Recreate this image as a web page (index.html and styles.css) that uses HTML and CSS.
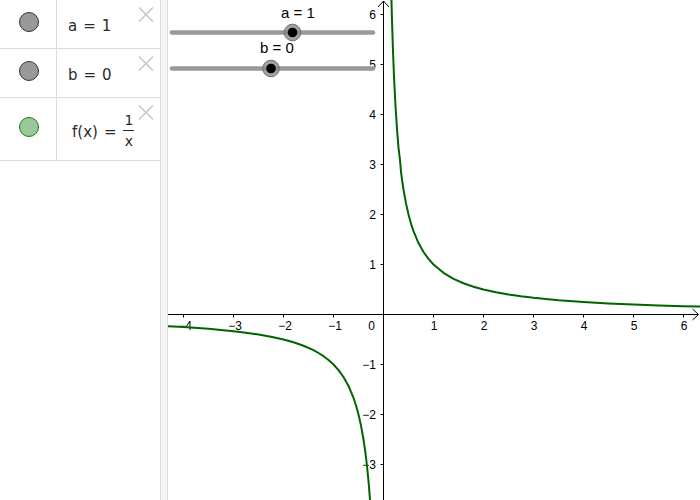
FILE: index.html
```html
<!DOCTYPE html>
<html>
<head>
<meta charset="utf-8">
<title>GeoGebra</title>
<link rel="stylesheet" href="styles.css">
</head>
<body>
<div class="app">
  <div class="algebra">
    <div class="row row-short">
      <div class="marble-cell"><span class="marble marble-gray"></span></div>
      <div class="content"><span class="expr">a<span class="eq">=</span>1</span></div>
      <svg class="close" width="16" height="15" viewBox="0 0 16 15"><path d="M1 0.5 L15 14.5 M15 0.5 L1 14.5"/></svg>
    </div>
    <div class="row row-short">
      <div class="marble-cell"><span class="marble marble-gray"></span></div>
      <div class="content"><span class="expr">b<span class="eq">=</span>0</span></div>
      <svg class="close" width="16" height="15" viewBox="0 0 16 15"><path d="M1 0.5 L15 14.5 M15 0.5 L1 14.5"/></svg>
    </div>
    <div class="row row-tall">
      <div class="marble-cell"><span class="marble marble-green"></span></div>
      <div class="content content-func">
        <span class="expr">f(x)<span class="eq">=</span></span>
        <span class="frac"><span class="num">1</span><span class="den">x</span></span>
      </div>
      <svg class="close" width="16" height="15" viewBox="0 0 16 15"><path d="M1 0.5 L15 14.5 M15 0.5 L1 14.5"/></svg>
    </div>
  </div>
  <div class="splitter"></div>
  <div class="graphics">
    <svg class="plot" width="532" height="500" viewBox="168 0 532 500">
      <!-- axes -->
      <g class="axis">
        <line x1="168" y1="314.5" x2="698" y2="314.5"/>
        <polyline points="692.5,309 698.5,314.5 692.5,320"/>
        <line x1="383.5" y1="1" x2="383.5" y2="500"/>
        <polyline points="378,7 383.5,1 389,7"/>
        <!-- x ticks -->
        <path d="M183.5 314.5 V317.5 M233.5 314.5 V317.5 M283.5 314.5 V317.5 M333.5 314.5 V317.5 M433.5 314.5 V317.5 M483.5 314.5 V317.5 M533.5 314.5 V317.5 M583.5 314.5 V317.5 M633.5 314.5 V317.5 M683.5 314.5 V317.5"/>
        <!-- y ticks -->
        <path d="M380.5 14.5 H383.5 M380.5 64.5 H383.5 M380.5 114.5 H383.5 M380.5 164.5 H383.5 M380.5 214.5 H383.5 M380.5 264.5 H383.5 M380.5 364.5 H383.5 M380.5 414.5 H383.5 M380.5 464.5 H383.5"/>
      </g>
      <g class="tick tick-x">
        <text x="185" y="330">−4</text>
        <text x="235" y="330">−3</text>
        <text x="285" y="330">−2</text>
        <text x="335" y="330">−1</text>
        <text x="434" y="330">1</text>
        <text x="484" y="330">2</text>
        <text x="534" y="330">3</text>
        <text x="584" y="330">4</text>
        <text x="634" y="330">5</text>
        <text x="684" y="330">6</text>
      </g>
      <g class="tick tick-y">
        <text x="375" y="330">0</text>
        <text x="376" y="19">6</text>
        <text x="376" y="69">5</text>
        <text x="376" y="119">4</text>
        <text x="376" y="169">3</text>
        <text x="376" y="219">2</text>
        <text x="376" y="269">1</text>
        <text x="376" y="369">−1</text>
        <text x="376" y="419">−2</text>
        <text x="376" y="469">−3</text>
      </g>
      <!-- function curve -->
      <g class="curve">
        <polyline points="391.25,-8 392,20.4 393,51.3 394,76.4 395.5,106.2 397,129.3 398.5,147.8 400,160 401,171.6 402.2,181 403.5,189.5 406,203.4 408.5,214.5 411,223.6 413.5,231.2 418.5,243.1 423.5,252 428.5,258.9 433.5,264.5 443.5,272.8 453.5,278.8 463.5,283.25 473.5,286.7 483.5,289.5 496,292.3 508.5,294.5 521,296.3 533.5,297.8 558.5,300.2 583.5,302 608.5,303.4 633.5,304.5 658.5,305.4 683.5,306.2 708.5,306.8"/>
        <polyline points="158.5,325.6 183.5,327 208.5,328.8 233.5,331.2 246,332.7 258.5,334.5 271,336.7 283.5,339.5 293.5,342.3 303.5,345.75 313.5,350.2 318.5,353 323.5,356.2 328.5,360 333.5,364.5 338.5,370.1 343.5,377 348.5,385.9 353.5,397.8 356,405.5 358.5,414.5 361,425.6 363.5,439.5 365.5,453.4 367,466 368.5,481.2 369.5,493.1 370.5,506.8"/>
      </g>
      <!-- sliders -->
      <g class="slider">
        <line class="slider-track" x1="172" y1="32.5" x2="373" y2="32.5"/>
        <circle class="knob-ring" cx="292.5" cy="32.5" r="8.3"/>
        <circle class="knob" cx="292.5" cy="32.5" r="4.8"/>
        <text class="slider-label" x="281" y="18">a = 1</text>
      </g>
      <g class="slider">
        <line class="slider-track" x1="172" y1="68.5" x2="373" y2="68.5"/>
        <circle class="knob-ring" cx="271" cy="68.5" r="8.3"/>
        <circle class="knob" cx="271" cy="68.5" r="4.8"/>
        <text class="slider-label" x="260" y="53">b = 0</text>
      </g>
    </svg>
  </div>
</div>
</body>
</html>
```

FILE: styles.css
```css
html, body {
  margin: 0;
  padding: 0;
  background: #ffffff;
}

.app {
  display: flex;
  width: 700px;
  height: 500px;
  overflow: hidden;
}

.algebra {
  width: 160px;
  flex: none;
  display: flex;
  flex-direction: column;
  background: #ffffff;
}

.row {
  position: relative;
  display: flex;
  align-items: stretch;
  border-bottom: 1px solid #dcdcdc;
}

.row-short {
  height: 48px;
}

.row-tall {
  height: 62px;
}

.marble-cell {
  width: 56px;
  flex: none;
  border-right: 1px solid #dcdcdc;
  display: flex;
  align-items: center;
  justify-content: center;
}

.marble {
  display: block;
  width: 18px;
  height: 18px;
  border-radius: 50%;
  margin-bottom: 4px;
  margin-left: 1px;
}

.marble-gray {
  background: #999999;
  border: 1px solid #333333;
}

.marble-green {
  background: #99c899;
  border: 1px solid #1f7a1f;
}

.content {
  flex: 1;
  display: flex;
  align-items: center;
  padding-left: 11px;
  padding-top: 4px;
  font-family: "DejaVu Sans", sans-serif;
  font-size: 15px;
  color: #2a2a2a;
}

.content-func {
  padding-left: 15px;
  padding-top: 6px;
}

.eq {
  display: inline-block;
  padding: 0 6px;
}

.frac {
  display: inline-flex;
  flex-direction: column;
  align-items: center;
  margin-left: 1px;
  font-size: 14px;
  line-height: 15px;
  margin-top: -3px;
}

.num {
  padding: 0 1px 2px;
  border-bottom: 1px solid #2a2a2a;
}

.den {
  padding-top: 3px;
}

.close {
  position: absolute;
  top: 7px;
  right: 6px;
}

.close path {
  fill: none;
  stroke: #c5ccc5;
  stroke-width: 1.6;
}

.splitter {
  width: 8px;
  flex: none;
  box-sizing: border-box;
  border-left: 1px solid #dcdcdc;
  border-right: 1px solid #dcdcdc;
  background: #f4f4f4;
}

.graphics {
  flex: 1;
  background: #ffffff;
}

.plot {
  display: block;
}

.axis line,
.axis path,
.axis polyline {
  fill: none;
  stroke: #000000;
  stroke-width: 1;
}

.tick {
  font-family: "Liberation Sans", Arial, sans-serif;
  font-size: 12px;
  fill: #000000;
}

.tick-x {
  text-anchor: middle;
}

.tick-y {
  text-anchor: end;
}

.curve polyline {
  fill: none;
  stroke: #006400;
  stroke-width: 2;
  stroke-linejoin: round;
}

.slider-track {
  stroke: #999999;
  stroke-width: 4.5;
  stroke-linecap: round;
}

.knob-ring {
  fill: #8a8a8a;
  fill-opacity: 0.8;
  stroke: #6e6e6e;
  stroke-width: 1;
}

.knob {
  fill: #000000;
}

.slider-label {
  font-family: "Liberation Sans", Arial, sans-serif;
  font-size: 15px;
  fill: #000000;
}
```
